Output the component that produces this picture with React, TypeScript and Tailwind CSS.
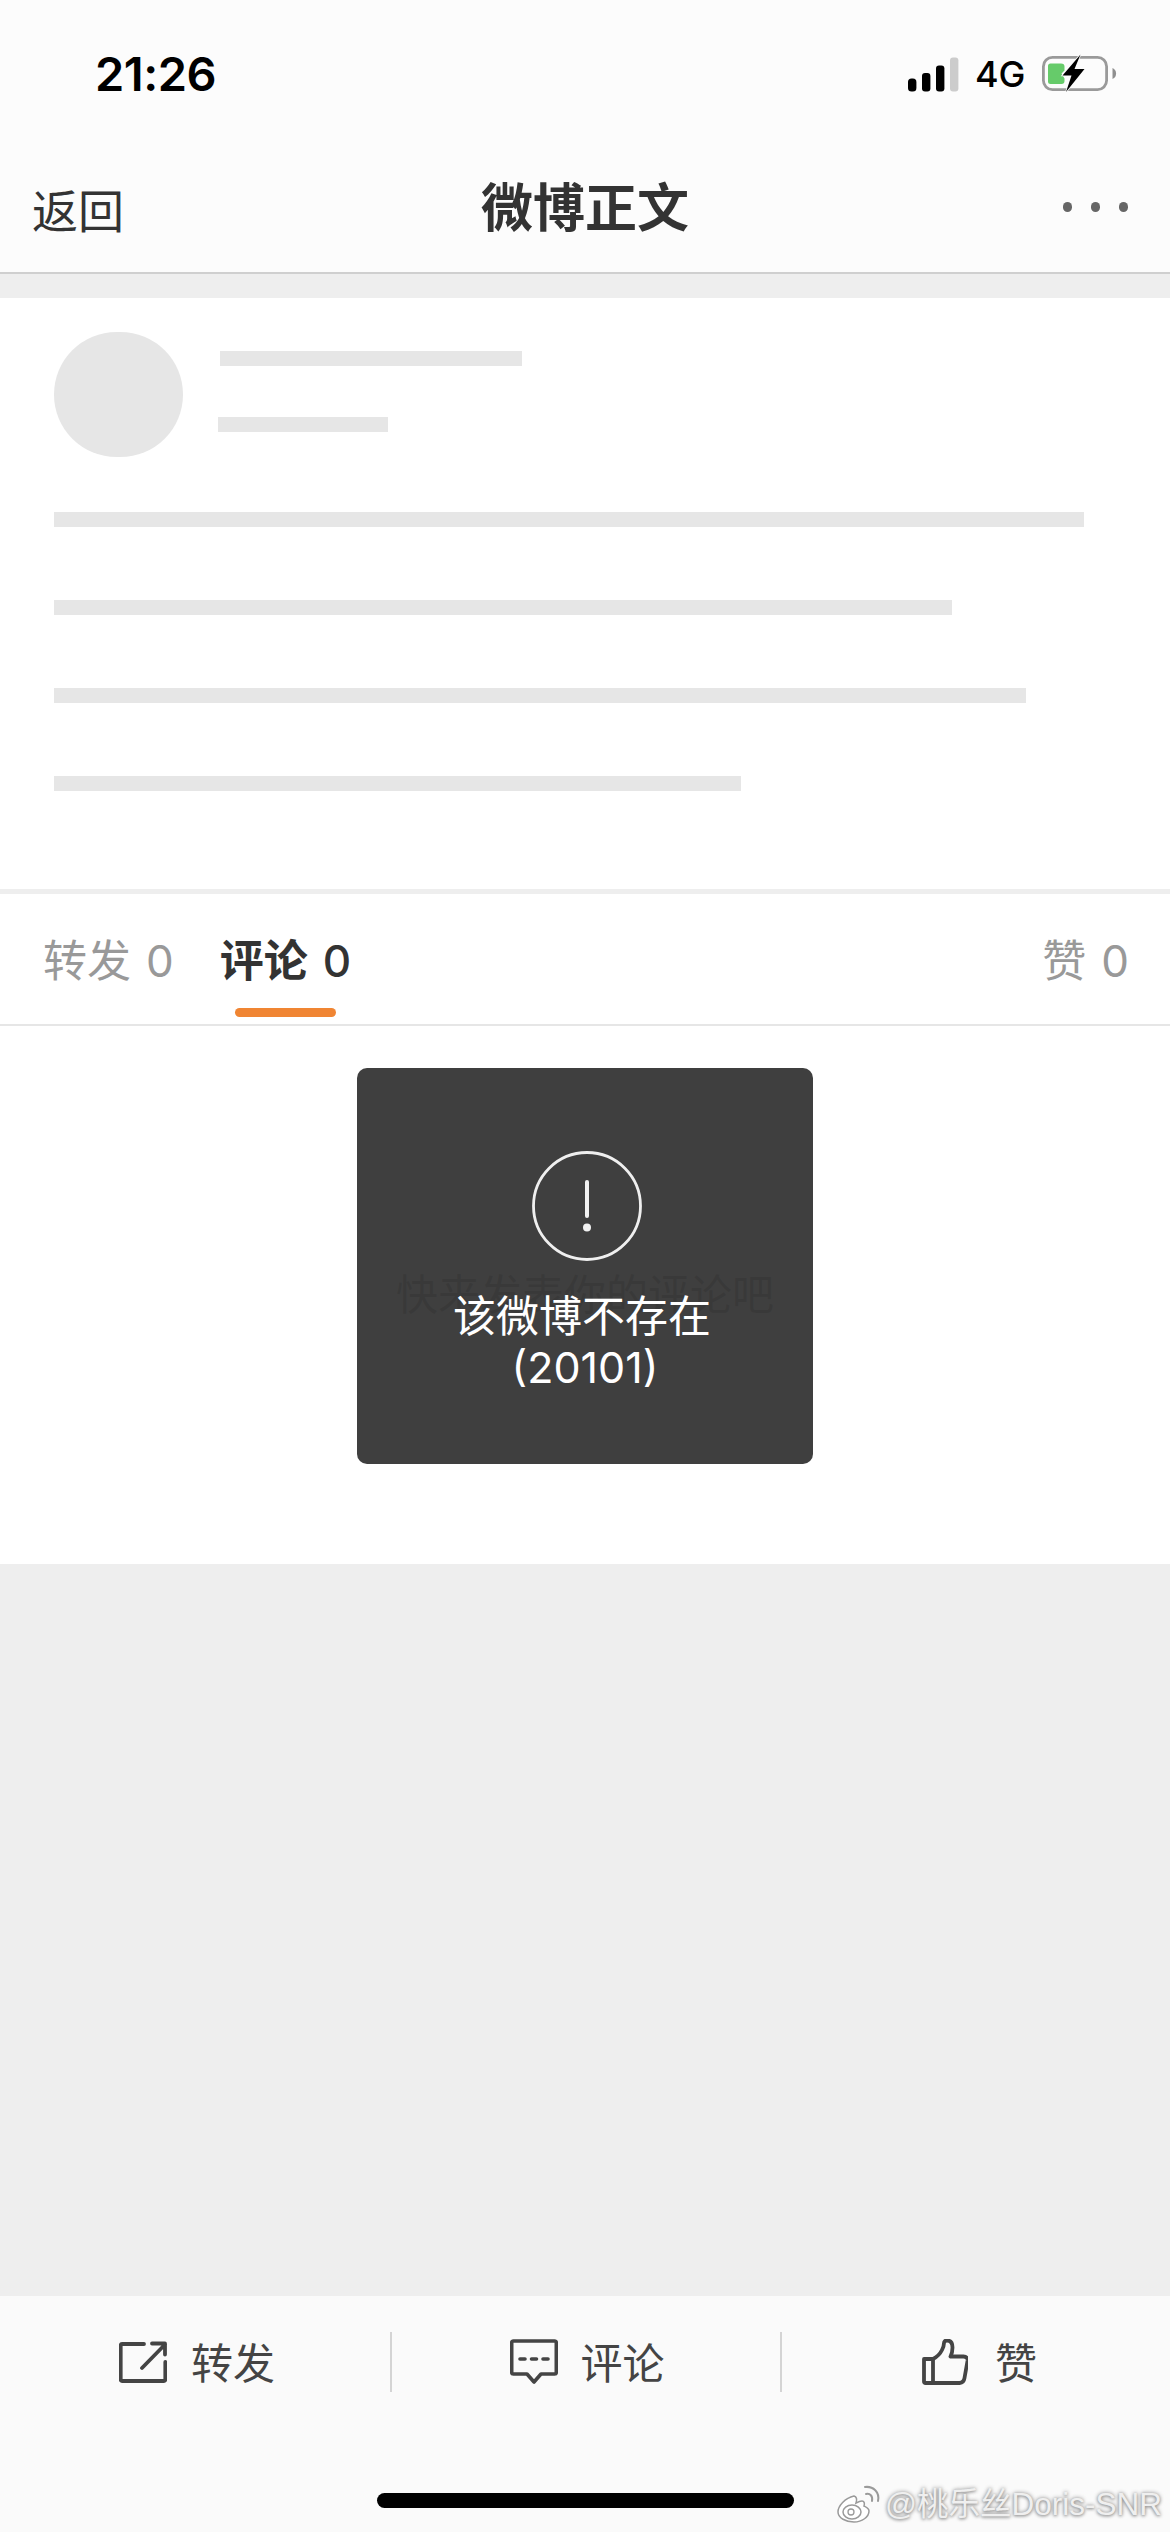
const cjk = "font-['Inter','Noto_Sans_CJK_SC',sans-serif]";

function StatusIcons() {
  return (
    <div className="flex items-center">
      <svg width="52" height="36" viewBox="0 0 52 36" className="block">
        <rect x="0" y="22.5" width="8.4" height="13" rx="3.5" fill="#000" />
        <rect x="14" y="17" width="8.4" height="18.5" rx="3" fill="#000" />
        <rect x="28" y="9.5" width="8.4" height="26" rx="3" fill="#000" />
        <rect x="42" y="1.5" width="8.4" height="34" rx="3" fill="#cccccc" />
      </svg>
      <span className="ml-[15px] w-[51px] text-[36px] leading-[36px] font-medium tracking-[-0.2px] text-black font-['Inter',sans-serif]">4G</span>
      <svg width="76" height="40" viewBox="0 0 76 40" className="ml-[16px] block">
        <rect x="1.4" y="3.4" width="63.2" height="32.2" rx="9" fill="none" stroke="#9a9a9a" strokeWidth="2.8" />
        <path d="M70.5 14v11q3.6-1.5 3.6-5.5T70.5 14z" fill="#8f8f8f" />
        <path d="M6 12q0-2.5 2.5-2.5H19q3.5 0 3.5 3v4l-3 3 3 5v2.5q0 3-3 3H8.500q-2.500 0-2.500-2.500z" fill="#66cb6a" />
        <path d="M38.500 0.500 20.500 21.500H29.500L24 38 42.500 15H32.500z" fill="#000" stroke="#fbfbfb" strokeWidth="1.600" paintOrder="stroke" />
      </svg>
    </div>
  );
}

function Tab({ label, active }: { label: string; active?: boolean }) {
  return (
    <div className={`text-[44px] leading-[50px] whitespace-nowrap ${active ? "font-semibold text-[#333333]" : "text-[#999999]"}`}>
      {label}
      <span className={`ml-[15px] ${active ? "font-medium" : "font-normal"}`}>0</span>
    </div>
  );
}

function Bar({ width }: { width: string }) {
  return <div className={`h-[15px] bg-[#e6e6e6] ${width}`} />;
}

function ActionButton({ label, children, box }: { label: string; children: React.ReactNode; box: string }) {
  return (
    <div className={`flex items-center justify-center ${box} text-[42px] leading-[50px] text-[#444444]`}>
      {children}
      <span className="pt-[4px]">{label}</span>
    </div>
  );
}

export default function App() {
  return (
    <div className={`relative flex h-[2532px] w-[1170px] flex-col overflow-hidden bg-[#eeeeee] ${cjk}`}>
      <header className="h-[274px] shrink-0 border-b-2 border-[#cfcfcf] bg-[#fcfcfc]">
        <div className="flex h-[148px] items-start justify-between pl-[95px] pr-[52px] pt-[48px]">
          <span className="text-[47px] font-semibold leading-[52px] tracking-[-0.5px] text-black font-['Inter',sans-serif]">21:26</span>
          <div className="pt-[6px]">
            <StatusIcons />
          </div>
        </div>
        <div className="relative flex h-[124px] items-start justify-between pl-[32px] pr-[42px] pt-[34px]">
          <span className="text-[46px] leading-[58px] text-[#333333]">返回</span>
          <span className="absolute left-[481px] top-[31px] text-[52px] font-bold leading-[60px] text-[#333333]">微博正文</span>
          <div className="flex gap-[19px] pt-[20px]">
            <div className="h-[10px] w-[9px] rounded-full bg-[#666666]" />
            <div className="h-[10px] w-[9px] rounded-full bg-[#666666]" />
            <div className="h-[10px] w-[9px] rounded-full bg-[#666666]" />
          </div>
        </div>
      </header>

      <div className="mt-[24px] h-[591px] shrink-0 bg-white px-[54px] pt-[34px]">
        <div className="flex items-start">
          <div className="h-[125px] w-[129px] rounded-full bg-[#e6e6e6]" />
          <div className="ml-[35px] flex flex-col pt-[19px]">
            <Bar width="ml-[2px] w-[302px]" />
            <Bar width="mt-[51px] w-[170px]" />
          </div>
        </div>
        <div className="mt-[55px] flex flex-col gap-[73px]">
          <Bar width="w-[1030px]" />
          <Bar width="w-[898px]" />
          <Bar width="w-[972px]" />
          <Bar width="w-[687px]" />
        </div>
      </div>

      <div className="mt-[5px] flex h-[132px] shrink-0 flex-col border-b-2 border-[#e6e6e6] bg-white">
        <div className="relative flex items-start justify-between pl-[43px] pr-[41px] pt-[42px]">
          <div className="flex gap-[46px]">
            <Tab label="转发" />
            <Tab label="评论" active />
          </div>
          <Tab label="赞" />
          <div className="absolute left-[235px] top-[114px] h-[9px] w-[101px] rounded-full bg-[#f08533]" />
        </div>
      </div>

      <div className="relative h-[538px] shrink-0 bg-white pt-[244px] text-center">
        <div className="text-[42px] leading-[50px] text-[#8a8a8a]">快来发表你的评论吧</div>
        <div className="absolute left-[357px] top-[42px] flex h-[396px] w-[456px] flex-col items-center rounded-[10px] bg-[#353535]/95 pt-[83px] text-white">
          <svg width="110" height="110" viewBox="0 0 110 110" className="ml-[3px] block">
            <circle cx="55" cy="55" r="53.500" fill="none" stroke="#efefef" strokeWidth="2.800" />
            <path d="M55 31v34" stroke="#f2f2f2" strokeWidth="4" strokeLinecap="round" />
            <circle cx="55" cy="76.500" r="4" fill="#f2f2f2" />
          </svg>
          <div className="mt-[30px] text-[43px] leading-[51px]">
            <div className="pr-[6px]">该微博不存在</div>
            <div>(20101)</div>
          </div>
        </div>
      </div>

      <div className="mt-auto h-[236px] shrink-0 bg-[#fafafa] pt-[36px]">
        <div className="flex h-[60px] items-center">
          <ActionButton label="转发" box="w-[390px] gap-[24px] pl-[4px]">
            <svg width="48" height="42" viewBox="0 0 48 42" fill="none" stroke="#444444" strokeWidth="3.800" strokeLinecap="round" strokeLinejoin="round" className="block">
              <path d="M25 3H3q-1.300 0-1.300 1.300v34.400q0 1.300 1.300 1.300h42q1.300 0 1.300-1.300V21" />
              <path d="M23 27 46 3.500M33 2.500h13v11" />
            </svg>
          </ActionButton>
          <div className="h-[60px] w-[2px] bg-[#d4d4d4]" />
          <ActionButton label="评论" box="w-[388px] gap-[22px] pl-[3px]">
            <svg width="48" height="46" viewBox="0 0 48 46" fill="none" stroke="#444444" strokeWidth="3.600" strokeLinecap="round" strokeLinejoin="round" className="block">
              <path d="M3.500 2h41q1.800 0 1.800 1.800v29.400q0 1.800-1.800 1.800H31l-7 8-7-8H3.500q-1.800 0-1.800-1.800V3.800Q1.700 2 3.500 2z" />
              <path d="M10 20h5M21.500 20h5M33 20h5" />
            </svg>
          </ActionButton>
          <div className="h-[60px] w-[2px] bg-[#d4d4d4]" />
          <ActionButton label="赞" box="flex-1 gap-[27px] pl-[7px]">
            <svg width="46" height="46" viewBox="0 0 46 46" fill="none" stroke="#444444" strokeWidth="3.800" strokeLinecap="round" strokeLinejoin="round" className="block">
              <path d="M2 20h9v24H3.500Q2 44 2 42.500V20z" />
              <path d="M11 20q6-3 9-9 2-4 2-7 0-2.500 3-2.500 5.500 0 5.500 7 0 5-2 9h13q4.500 0 4 4.500l-3 17q-.6 4.500-5 5H11" />
            </svg>
          </ActionButton>
        </div>
        <div className="mt-[101px] ml-[377px] h-[15px] w-[417px] rounded-full bg-black" />
      </div>

      <div className="absolute left-[837px] top-[2484px] flex items-center">
        <svg width="44" height="38" viewBox="0 0 44 38" fill="none" className="block">
          <path d="M17 11C8 13 1 21 1 27c0 6 8 10 16 10s15-5 15-11c0-3-3-4-5-5 1-3 0-5-2-5-2 0-4 1-6 2 1-3 1-6-2-7z" fill="#ffffff" stroke="#9a9a9a" strokeWidth="1.500" />
          <ellipse cx="15" cy="27" rx="9" ry="7" stroke="#9a9a9a" strokeWidth="1.500" />
          <circle cx="14" cy="27" r="3" stroke="#9a9a9a" strokeWidth="1.300" />
          <path d="M29 9c4-1 7 2 6 7M28 2c8-1 15 5 13 14" stroke="#9a9a9a" strokeWidth="2" strokeLinecap="round" />
        </svg>
        <span className="ml-[4px] whitespace-nowrap text-[31.5px] leading-[40px] text-[#efefef] [text-shadow:0_0_4px_#8a8a8a,0_1px_3px_#a0a0a0] font-['Liberation_Sans','Noto_Sans_CJK_SC',sans-serif]">@桃乐丝Doris-SNR</span>
      </div>
    </div>
  );
}
